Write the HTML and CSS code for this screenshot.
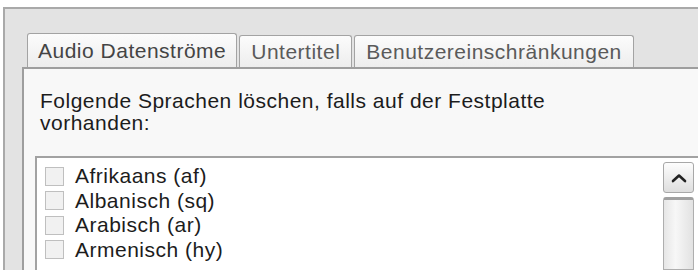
FILE: index.html
```html
<!DOCTYPE html>
<html lang="de">
<head>
<meta charset="utf-8">
<title>Optionen</title>
<link rel="stylesheet" href="styles.css">
</head>
<body>
<div class="win">
  <div class="tabbar">
    <div class="tab sel">Audio Datenströme</div>
    <div class="tab">Untertitel</div>
    <div class="tab">Benutzereinschränkungen</div>
  </div>
  <div class="page">
    <p class="desc">Folgende Sprachen löschen, falls auf der Festplatte<br>vorhanden:</p>
    <div class="list">
      <ul class="items">
        <li><span class="cb"></span>Afrikaans (af)</li>
        <li><span class="cb"></span>Albanisch (sq)</li>
        <li><span class="cb"></span>Arabisch (ar)</li>
        <li><span class="cb"></span>Armenisch (hy)</li>
      </ul>
      <div class="scroll">
        <div class="up"><svg width="16" height="10" viewBox="0 0 16 10"><polyline points="2,8 8,2.5 14,8" fill="none" stroke="#222" stroke-width="2.6" stroke-linejoin="round" stroke-linecap="round"/></svg></div>
        <div class="thumb"></div>
      </div>
    </div>
  </div>
</div>
</body>
</html>
```
FILE: styles.css
```css
html, body {
  margin: 0;
  height: 100%;
  overflow: hidden;
  background: #fff;
  font-family: "Liberation Sans", Arial, sans-serif;
  letter-spacing: 0.5px;
}
.win {
  margin: 7px 0 0 3px;
  height: 263px;
  box-sizing: border-box;
  border-top: 2px solid #a9a9a9;
  border-left: 2px solid #a9a9a9;
  background: #e3e3e3;
  padding: 24px 0 0 17px;
  display: flex;
  flex-direction: column;
}
.tabbar {
  display: flex;
  align-items: flex-end;
  gap: 2px;
  height: 34px;
  padding-left: 5px;
}
.tab {
  height: 32px;
  box-sizing: border-box;
  border: 1px solid #a3a3a3;
  border-bottom: none;
  border-radius: 3px 3px 0 0;
  background: linear-gradient(#fcfcfc, #ededed);
  font-size: 21px;
  color: #5a5a5a;
  padding: 0 11px;
  display: flex;
  align-items: center;
  white-space: nowrap;
}
.tab.sel {
  height: 34px;
  padding: 0 10px;
  color: #444;
}
.page {
  flex: 1;
  border-top: 2px solid #9e9e9e;
  border-left: 2px solid #9e9e9e;
  background: #f8f8f8;
  padding: 21px 0 0 11px;
  display: flex;
  flex-direction: column;
}
.desc {
  margin: 0 0 22px 5px;
  font-size: 21px;
  line-height: 22px;
  color: #1c1c1c;
}
.list {
  flex: 1;
  border-top: 2px solid #a2a2a2;
  border-left: 2px solid #a2a2a2;
  background: #fff;
  display: flex;
}
.items {
  flex: 1;
  list-style: none;
  margin: 0;
  padding: 6px 0 0 8px;
}
.items li {
  display: flex;
  align-items: center;
  gap: 11px;
  height: 24.5px;
  font-size: 21px;
  color: #1c1c1c;
}
.cb {
  width: 19px;
  height: 19px;
  box-sizing: border-box;
  border: 1px solid #bfbfbf;
  background: #f1f1f1;
}
.scroll {
  width: 31px;
  margin: 4px 4px 0 0;
  display: flex;
  flex-direction: column;
  gap: 4px;
}
.up {
  height: 31px;
  box-sizing: border-box;
  border: 1px solid #a8a8a8;
  border-radius: 3px;
  background: linear-gradient(#fdfdfd, #dedede);
  display: flex;
  align-items: center;
  justify-content: center;
}
.thumb {
  flex: 1;
  border: 1px solid #aeaeae;
  border-top: 3px solid #a0a0a0;
  border-radius: 3px 3px 0 0;
  background: linear-gradient(90deg, #e6e6e6, #f7f7f7 40%, #e2e2e2);
}
```
